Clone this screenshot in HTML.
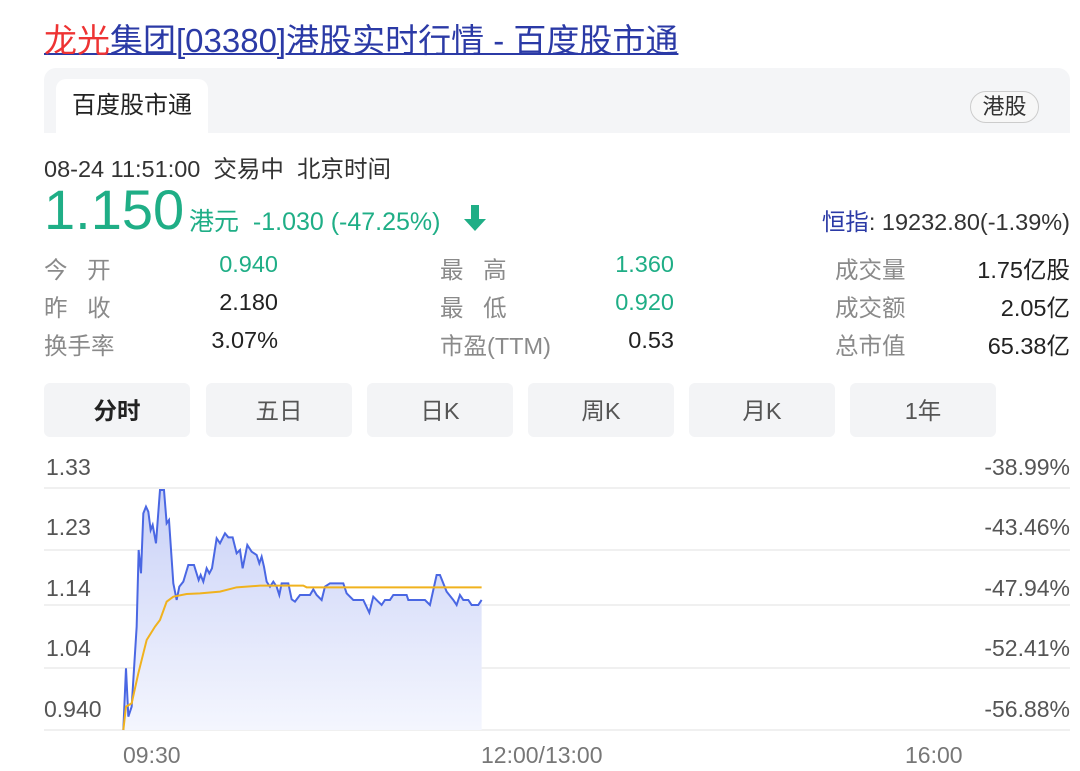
<!DOCTYPE html>
<html><head><meta charset="utf-8"><style>
body{margin:0;width:1080px;height:771px;background:#fff;position:relative;overflow:hidden;font-family:"Liberation Sans","Noto Sans CJK SC",sans-serif;}
.a{position:absolute;white-space:nowrap;}
.t{font-size:33px;top:14px;left:44px;color:#2b3aa6;text-decoration:underline;text-decoration-thickness:2px;}
.t span{color:#e33;}
.g{color:#8a8a8a;font-size:23.5px;}
.v{font-size:23.5px;color:#222;text-align:right;}
.gr{color:#1fae86;}
.btn{position:absolute;top:383px;width:146px;height:54px;background:#f3f4f6;border-radius:6px;text-align:center;line-height:56px;font-size:23.5px;color:#555;}
.yl{font-size:23px;color:#555;}
</style></head><body>
<div class="a t"><span>龙光</span>集团[03380]港股实时行情 - 百度股市通</div>
<div class="a" style="left:44px;top:68px;width:1026px;height:65px;background:#f4f5f7;border-radius:12px 12px 0 0;"></div>
<div class="a" style="left:56px;top:79px;width:152px;height:54px;background:#fff;border-radius:10px 10px 0 0;font-size:24px;color:#222;line-height:54px;text-align:center;">百度股市通</div>
<div class="a" style="left:970px;top:91px;width:67px;height:30px;border:1px solid #ccc;border-radius:16px;background:#f7f7f7;font-size:22px;color:#333;line-height:30px;text-align:center;">港股</div>
<div class="a" style="left:44px;top:150px;font-size:23.5px;color:#333;">08-24 11:51:00&nbsp; 交易中&nbsp; 北京时间</div>
<div class="a gr" style="left:44px;top:180px;font-size:56px;line-height:60px;">1.150</div>
<div class="a gr" style="left:189px;top:202px;font-size:25px;">港元&nbsp; -1.030 (-47.25%)</div>
<svg class="a" style="left:462px;top:203px" width="26" height="30"><path d="M9 2h8v14h7L13 28 2 16h7z" fill="#1fae86"/></svg>
<div class="a" style="right:10px;top:203px;font-size:23.5px;color:#333;"><span style="color:#2b3aa6">恒指</span>: 19232.80(-1.39%)</div>

<div class="a g" style="left:44px;top:251px">今&nbsp;&nbsp;&nbsp;开</div><div class="a v gr" style="right:802px;top:251px">0.940</div>
<div class="a g" style="left:44px;top:289px">昨&nbsp;&nbsp;&nbsp;收</div><div class="a v" style="right:802px;top:289px">2.180</div>
<div class="a g" style="left:44px;top:327px">换手率</div><div class="a v" style="right:802px;top:327px">3.07%</div>
<div class="a g" style="left:440px;top:251px">最&nbsp;&nbsp;&nbsp;高</div><div class="a v gr" style="right:406px;top:251px">1.360</div>
<div class="a g" style="left:440px;top:289px">最&nbsp;&nbsp;&nbsp;低</div><div class="a v gr" style="right:406px;top:289px">0.920</div>
<div class="a g" style="left:440px;top:327px">市盈(TTM)</div><div class="a v" style="right:406px;top:327px">0.53</div>
<div class="a g" style="left:835px;top:251px">成交量</div><div class="a v" style="right:10px;top:251px">1.75亿股</div>
<div class="a g" style="left:835px;top:289px">成交额</div><div class="a v" style="right:10px;top:289px">2.05亿</div>
<div class="a g" style="left:835px;top:327px">总市值</div><div class="a v" style="right:10px;top:327px">65.38亿</div>

<div class="btn" style="left:44px;font-weight:bold;color:#222">分时</div>
<div class="btn" style="left:206px">五日</div>
<div class="btn" style="left:367px">日K</div>
<div class="btn" style="left:528px">周K</div>
<div class="btn" style="left:689px">月K</div>
<div class="btn" style="left:850px">1年</div>

<svg class="a" style="left:0;top:0" width="1080" height="771">
<defs><linearGradient id="f" x1="0" y1="0" x2="0" y2="1"><stop offset="0" stop-color="#c9d1f7"/><stop offset="1" stop-color="#f4f6fe"/></linearGradient></defs>
<g stroke="#ececec" stroke-width="1.5">
<line x1="44" y1="488" x2="1070" y2="488"/><line x1="44" y1="550" x2="1070" y2="550"/><line x1="44" y1="605" x2="1070" y2="605"/><line x1="44" y1="668" x2="1070" y2="668"/><line x1="44" y1="730" x2="1070" y2="730"/>
</g>
<g transform="translate(40,440) scale(0.3333)">
<path fill="url(#f)" d="M250,870 L258,685 265,830 275,800 290,560 296,330 303,400 310,220 318,200 325,215 332,270 338,255 348,310 360,150 372,150 380,250 387,240 400,430 410,480 418,440 430,425 445,375 462,375 476,420 482,405 490,425 500,385 508,400 516,385 530,295 540,310 555,280 565,292 578,292 590,340 600,330 608,385 622,315 635,335 650,345 658,370 665,350 672,380 680,425 690,440 700,425 710,440 718,465 725,430 745,430 755,478 765,485 780,465 790,465 810,465 820,448 830,465 845,480 855,440 870,430 910,430 920,460 940,480 970,480 988,518 1000,470 1015,485 1025,495 1035,480 1050,480 1060,465 1100,465 1105,480 1155,480 1170,495 1190,405 1200,405 1220,455 1240,480 1250,495 1260,465 1270,480 1285,480 1295,495 1315,495 1325,480 L1325,870Z"/>
<path fill="none" stroke="#4a67e3" stroke-width="6" d="M250,870 L258,685 265,830 275,800 290,560 296,330 303,400 310,220 318,200 325,215 332,270 338,255 348,310 360,150 372,150 380,250 387,240 400,430 410,480 418,440 430,425 445,375 462,375 476,420 482,405 490,425 500,385 508,400 516,385 530,295 540,310 555,280 565,292 578,292 590,340 600,330 608,385 622,315 635,335 650,345 658,370 665,350 672,380 680,425 690,440 700,425 710,440 718,465 725,430 745,430 755,478 765,485 780,465 790,465 810,465 820,448 830,465 845,480 855,440 870,430 910,430 920,460 940,480 970,480 988,518 1000,470 1015,485 1025,495 1035,480 1050,480 1060,465 1100,465 1105,480 1155,480 1170,495 1190,405 1200,405 1220,455 1240,480 1250,495 1260,465 1270,480 1285,480 1295,495 1315,495 1325,480"/>
<path fill="none" stroke="#f0b21e" stroke-width="6" d="M250,870 L258,800 275,790 295,700 320,600 345,560 360,540 380,485 400,470 440,462 480,460 540,455 590,442 660,437 790,437 800,442 1325,442"/>
</g>
</svg>
<div class="a yl" style="left:46px;top:454px">1.33</div>
<div class="a yl" style="left:46px;top:514px">1.23</div>
<div class="a yl" style="left:46px;top:575px">1.14</div>
<div class="a yl" style="left:46px;top:635px">1.04</div>
<div class="a yl" style="left:44px;top:696px">0.940</div>
<div class="a yl" style="right:10px;top:454px">-38.99%</div>
<div class="a yl" style="right:10px;top:514px">-43.46%</div>
<div class="a yl" style="right:10px;top:575px">-47.94%</div>
<div class="a yl" style="right:10px;top:635px">-52.41%</div>
<div class="a yl" style="right:10px;top:696px">-56.88%</div>
<div class="a yl" style="left:123px;top:742px;color:#777">09:30</div>
<div class="a yl" style="left:481px;top:742px;color:#777">12:00/13:00</div>
<div class="a yl" style="left:905px;top:742px;color:#777">16:00</div>
</body></html>
